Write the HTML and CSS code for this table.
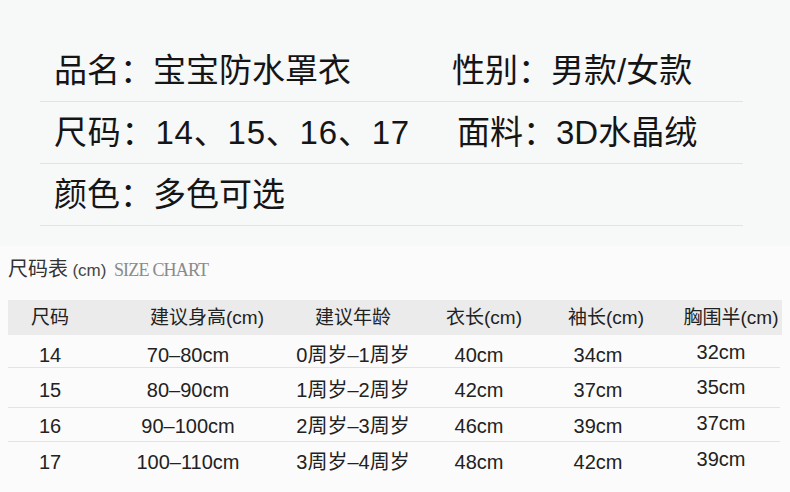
FILE: index.html
```html
<!DOCTYPE html>
<html lang="zh-CN">
<head>
<meta charset="utf-8">
<title>宝宝防水罩衣</title>
<link rel="stylesheet" href="styles.css">
</head>
<body>
<section class="spec">
  <div class="spec-row">
    <div class="cell">品名：宝宝防水罩衣</div>
    <div class="cell">性别：男款/女款</div>
  </div>
  <div class="spec-row">
    <div class="cell sizes">尺码：14、15、16、17</div>
    <div class="cell shift">面料：3D水晶绒</div>
  </div>
  <div class="spec-row">
    <div class="cell">颜色：多色可选</div>
    <div class="cell"></div>
  </div>
</section>
<section class="chart">
  <div class="chart-title"><span class="t-cn">尺码表</span> <span class="t-unit">(cm)</span> <span class="t-en">SIZE CHART</span></div>
  <div class="table">
    <div class="tr head">
      <div class="td">尺码</div>
      <div class="td h2">建议身高(cm)</div>
      <div class="td">建议年龄</div>
      <div class="td h4">衣长(cm)</div>
      <div class="td h5">袖长(cm)</div>
      <div class="td h6">胸围半(cm)</div>
    </div>
    <div class="tr r1">
      <div class="td">14</div>
      <div class="td">70–80cm</div>
      <div class="td">0周岁–1周岁</div>
      <div class="td">40cm</div>
      <div class="td">34cm</div>
      <div class="td c6">32cm</div>
    </div>
    <div class="tr r2">
      <div class="td">15</div>
      <div class="td">80–90cm</div>
      <div class="td">1周岁–2周岁</div>
      <div class="td">42cm</div>
      <div class="td">37cm</div>
      <div class="td c6">35cm</div>
    </div>
    <div class="tr r3">
      <div class="td">16</div>
      <div class="td">90–100cm</div>
      <div class="td">2周岁–3周岁</div>
      <div class="td">46cm</div>
      <div class="td">39cm</div>
      <div class="td c6">37cm</div>
    </div>
    <div class="tr r4">
      <div class="td">17</div>
      <div class="td">100–110cm</div>
      <div class="td">3周岁–4周岁</div>
      <div class="td">48cm</div>
      <div class="td">42cm</div>
      <div class="td c6">39cm</div>
    </div>
  </div>
</section>
</body>
</html>
```
FILE: styles.css
```css
html, body {
  margin: 0;
  padding: 0;
}
body {
  width: 790px;
  height: 492px;
  overflow: hidden;
  background: #fbfbfb;
  font-family: "Liberation Sans", "Noto Sans CJK SC", sans-serif;
  color: #1a1a1a;
}
.spec {
  background: #f7f8f8;
  padding: 40px 0 20px 40px;
}
.spec-row {
  width: 689px;
  height: 61px;
  padding-left: 14px;
  border-bottom: 1px solid #e2e3e3;
  display: grid;
  grid-template-columns: 398px 1fr;
}
.cell {
  font-size: 33px;
  line-height: 61px;
  white-space: nowrap;
  color: #151515;
}
.sizes {
  letter-spacing: 0.8px;
}
.shift {
  padding-left: 5px;
}
.chart {
  padding: 11px 8px 0 8px;
}
.chart-title {
  height: 24px;
  line-height: 24px;
  margin-bottom: 19px;
  white-space: nowrap;
}
.t-cn {
  font-size: 20px;
  color: #333;
}
.t-unit {
  font-size: 17px;
  color: #444;
}
.t-en {
  font-family: "Liberation Serif", serif;
  font-size: 18px;
  letter-spacing: -0.8px;
  color: #8a8a8a;
  margin-left: 3px;
}
.table {
  width: 774px;
}
.tr {
  display: grid;
  grid-template-columns: 84px 192px 138px 114px 124px 122px;
  font-size: 20px;
  line-height: 24px;
  color: #222;
  border-bottom: 1px solid #e3e3e3;
  margin-right: 2px;
}
.td {
  text-align: center;
  white-space: nowrap;
}
.tr.head {
  background: #ebebeb;
  height: 35px;
  line-height: 35px;
  font-size: 19px;
  border-bottom: none;
  margin-right: 0;
}
.h2 { padding-left: 38px; }
.h4 { padding-left: 10px; }
.h5 { padding-left: 16px; }
.h6 { padding-left: 20px; }
.r1 { padding: 8px 0 0; height: 24px; }
.r2 { padding: 10px 0 5px; }
.r3 { padding: 6px 0 3px; }
.r4 { padding: 8px 0 8px; border-bottom: none; }
.c6 { margin-top: -3px; }
```
